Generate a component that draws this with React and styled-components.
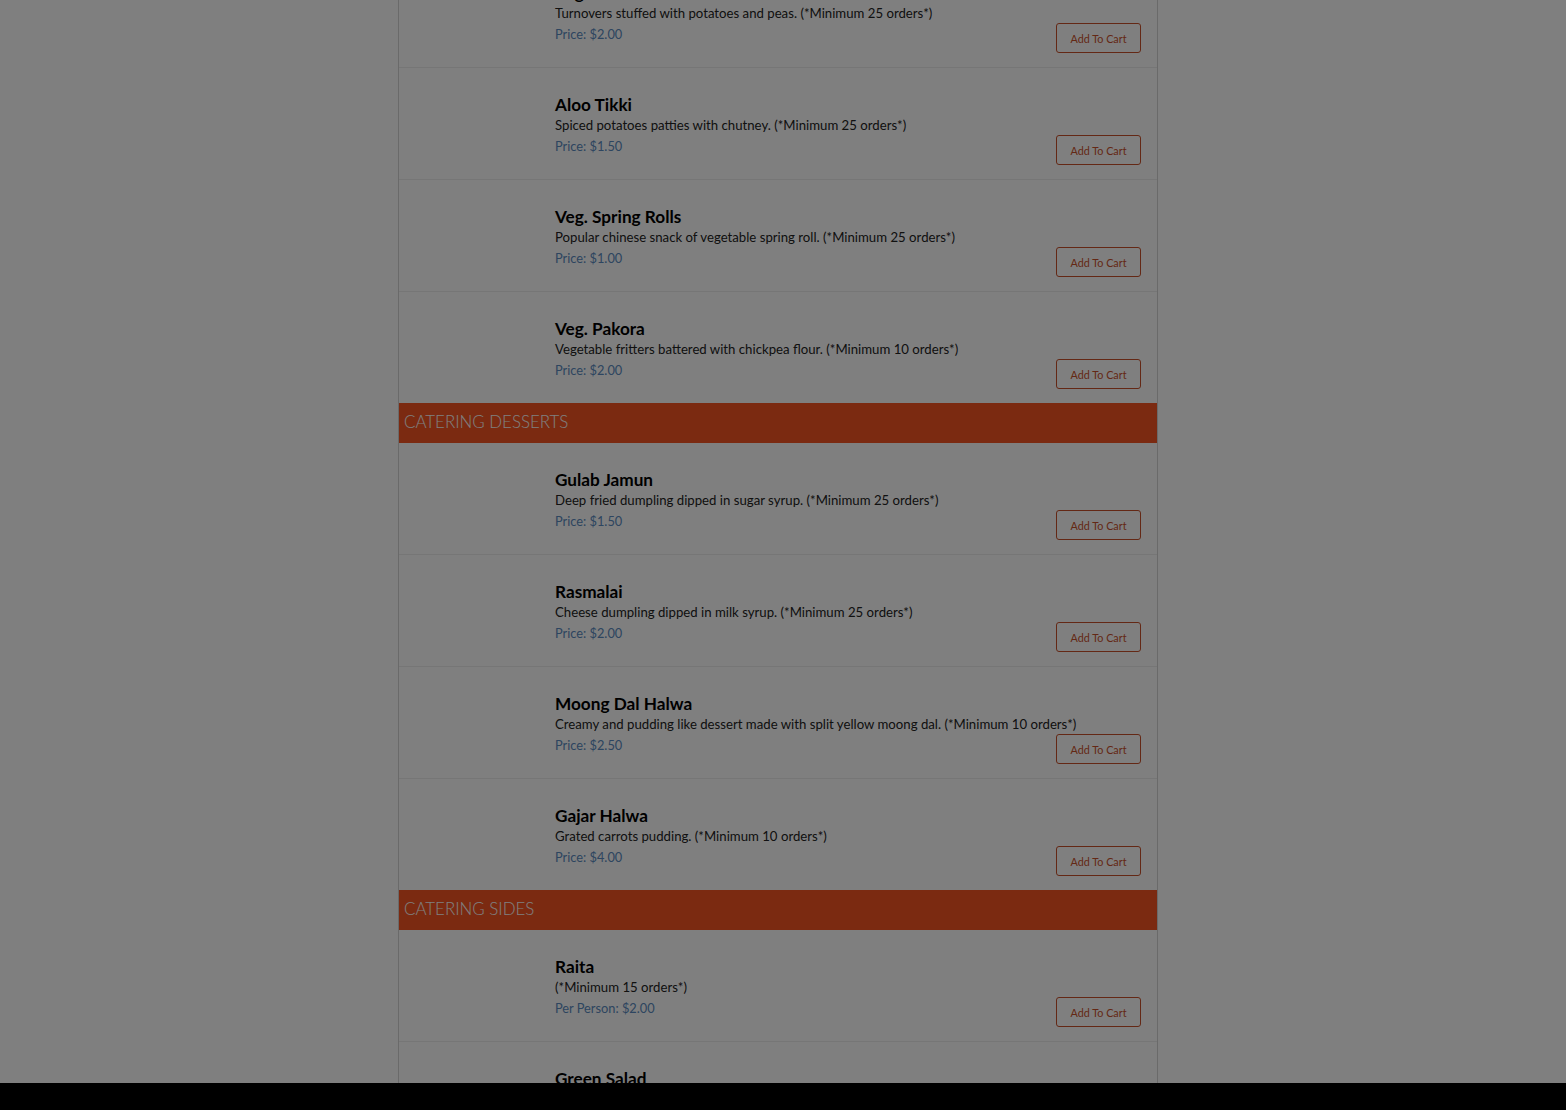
import React from "react";
import styled, { createGlobalStyle } from "styled-components";

const GlobalStyle = createGlobalStyle`
  html, body {
    margin: 0;
    padding: 0;
    background: #fff;
    overflow: hidden;
  }
  body {
    font-family: "Lato", "Liberation Sans", sans-serif;
  }
`;

const sections = [
  {
    title: null,
    items: [
      { name: "Veg. Samosa", desc: "Turnovers stuffed with potatoes and peas. (*Minimum 25 orders*)", price: "Price: $2.00" },
      { name: "Aloo Tikki", desc: "Spiced potatoes patties with chutney. (*Minimum 25 orders*)", price: "Price: $1.50" },
      { name: "Veg. Spring Rolls", desc: "Popular chinese snack of vegetable spring roll. (*Minimum 25 orders*)", price: "Price: $1.00" },
      { name: "Veg. Pakora", desc: "Vegetable fritters battered with chickpea flour. (*Minimum 10 orders*)", price: "Price: $2.00" },
    ],
  },
  {
    title: "Catering Desserts",
    items: [
      { name: "Gulab Jamun", desc: "Deep fried dumpling dipped in sugar syrup. (*Minimum 25 orders*)", price: "Price: $1.50" },
      { name: "Rasmalai", desc: "Cheese dumpling dipped in milk syrup. (*Minimum 25 orders*)", price: "Price: $2.00" },
      { name: "Moong Dal Halwa", desc: "Creamy and pudding like dessert made with split yellow moong dal. (*Minimum 10 orders*)", price: "Price: $2.50" },
      { name: "Gajar Halwa", desc: "Grated carrots pudding. (*Minimum 10 orders*)", price: "Price: $4.00" },
    ],
  },
  {
    title: "Catering Sides",
    items: [
      { name: "Raita", desc: "(*Minimum 15 orders*)", price: "Per Person: $2.00" },
      { name: "Green Salad", desc: "(*Minimum 15 orders*)", price: "Per Person: $2.00" },
    ],
  },
];

const App = () => {
  return (
    <>
      <GlobalStyle />
      <Page>
        <Menu>
          {sections.map((section, i) => (
            <Section key={i}>
              {section.title && <SectionHeader>{section.title}</SectionHeader>}
              {section.items.map((item, j) => (
                <Item key={item.name} $first={j === 0}>
                  <Thumb />
                  <Info>
                    <Name>{item.name}</Name>
                    <Desc>{item.desc}</Desc>
                    <Price>{item.price}</Price>
                  </Info>
                  <CartButton>Add To Cart</CartButton>
                </Item>
              ))}
            </Section>
          ))}
        </Menu>
      </Page>
      <Overlay />
      <BottomBar />
    </>
  );
};

export default App;

const Page = styled.div`
  padding-right: 10px;
  height: 1110px;
  overflow: hidden;
`;

const Menu = styled.div`
  width: 758px;
  margin: -44px auto 0;
  border-left: 1px solid #d4d4d4;
  border-right: 1px solid #d4d4d4;
  background: #fff;
`;

const Section = styled.div`
  display: flex;
  flex-direction: column;
`;

const SectionHeader = styled.div`
  height: 40px;
  box-sizing: border-box;
  display: flex;
  align-items: center;
  padding: 0 0 3px 5px;
  background: #f65422;
  color: #fff;
  font-family: "Lato", sans-serif;
  font-weight: 300;
  font-size: 16.9px;
  text-transform: uppercase;
`;

const Item = styled.div`
  display: grid;
  grid-template-columns: 156px minmax(0, 1fr) auto;
  height: ${(p) => (p.$first ? "111px" : "112px")};
  box-sizing: border-box;
  padding: 26px 16px 0 0;
  border-top: ${(p) => (p.$first ? "none" : "1px solid #ececec")};
`;

const Thumb = styled.div``;

const Info = styled.div`
  display: flex;
  flex-direction: column;
  white-space: nowrap;
`;

const Name = styled.div`
  font-size: 17.2px;
  font-weight: 700;
  line-height: 21px;
  color: #000;
`;

const Desc = styled.div`
  font-size: 13.2px;
  line-height: 21px;
  color: #222;
`;

const Price = styled.div`
  font-size: 12.8px;
  line-height: 21px;
  color: #5a8ac0;
`;

const CartButton = styled.button`
  align-self: start;
  margin-top: 41px;
  width: 85px;
  height: 30px;
  padding: 0;
  border: 1px solid #c9502a;
  border-radius: 3px;
  background: transparent;
  color: #c9502a;
  font-family: "Lato", sans-serif;
  font-size: 10.8px;
  cursor: pointer;
`;

const Overlay = styled.div`
  position: fixed;
  inset: 0;
  background: rgba(0, 0, 0, 0.5);
`;

const BottomBar = styled.div`
  position: fixed;
  left: 0;
  right: 0;
  bottom: 0;
  height: 27px;
  background: #000;
`;
